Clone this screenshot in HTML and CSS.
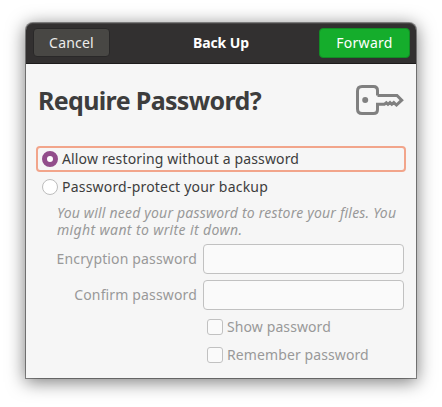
FILE: index.html
```html
<!DOCTYPE html>
<html lang="en">
<head>
<meta charset="utf-8">
<title>Back Up</title>
<link rel="stylesheet" href="styles.css">
</head>
<body>
<main class="window">
  <header class="headerbar">
    <button class="button cancel">Cancel</button>
    <h2 class="window-title">Back Up</h2>
    <button class="button forward">Forward</button>
  </header>
  <section class="content">
    <div class="heading">
      <h1>Require Password?</h1>
      <svg class="key" width="50" height="32" viewBox="0 0 50 32" fill="none" stroke="#808080" stroke-width="3">
        <path d="M22.500 11.500V6.500Q22.500 2.500 18.500 2.500H7Q2.500 2.500 2.500 7V25Q2.500 29.500 7 29.500H18.500Q22.500 29.500 22.500 25.500V20.300H30"/>
        <path d="M22.500 11.500H42L46.700 16.200L41.500 21L38.800 18.600L36.800 20.300L35 18.600L33 20.300L31.300 18.800L29.500 20.300"/>
        <circle cx="10.200" cy="16" r="3" fill="#808080" stroke="none"/>
      </svg>
    </div>
    <div class="choice focused"><span class="radio checked"></span><span class="t-allow">Allow restoring without a password</span></div>
    <div class="choice"><span class="radio"></span><span class="t-protect">Password-protect your backup</span></div>
    <p class="hint"><span>You will need your password to restore your files. You</span> <span class="t-write">might want to write it down.</span></p>
    <div class="form">
      <span class="label">Encryption password</span><span class="entry"></span>
      <span class="label">Confirm password</span><span class="entry"></span>
    </div>
    <div class="check-row"><span class="check"></span><span>Show password</span></div>
    <div class="check-row"><span class="check"></span><span>Remember password</span></div>
  </section>
</main>
</body>
</html>
```
FILE: styles.css
```css
* { box-sizing: border-box; }
body {
  margin: 0;
  width: 442px;
  height: 407px;
  overflow: hidden;
  background: #fff;
  font: 14px/20px "Noto Sans", "Open Sans", sans-serif;
  letter-spacing: 0.2px;
  color: #3d3d3d;
}
.window {
  width: 390px;
  height: 355px;
  margin: 23px 0 0 26px;
  border-radius: 7px 7px 0 0;
  background: #f6f6f6;
  box-shadow: 0 0 0 1px rgba(0, 0, 0, 0.4), 0 3px 18px 1px rgba(0, 0, 0, 0.52);
}
.headerbar {
  display: flex;
  justify-content: space-between;
  align-items: center;
  height: 41px;
  padding: 0 6px 1px 7px;
  border-radius: 7px 7px 0 0;
  border-bottom: 1px solid #1d1c1c;
  background: #323030;
  box-shadow: inset 0 1px #474545;
}
.window-title {
  margin: 0 0 0 13px;
  font-size: 14px;
  line-height: 20px;
  letter-spacing: -0.1px;
  color: #fff;
}
.button {
  padding: 0;
  border-radius: 4px;
  font: inherit;
  text-align: center;
}
.cancel {
  width: 77px;
  height: 29px;
  border: 1px solid #292828;
  background: #484744;
  color: #ececea;
  letter-spacing: 0.2px;
}
.forward {
  width: 91px;
  height: 30px;
  border: 1px solid #128c25;
  background: #15ad2c;
  color: #fff;
  letter-spacing: 0.3px;
}
.content { padding: 0 10px; }
.heading {
  display: flex;
  justify-content: space-between;
  height: 82px;
  padding: 20px 0 0 2px;
}
.heading h1 {
  margin: 0;
  font-size: 25px;
  line-height: 32px;
  letter-spacing: -0.65px;
}
.key { margin-right: 1px; }
.choice {
  display: flex;
  align-items: center;
  gap: 4px;
  width: 370px;
  height: 28px;
  padding-left: 6px;
}
.choice.focused {
  height: 26px;
  margin-bottom: 1px;
  padding-left: 4px;
  border: 2px solid #f2a58b;
  border-radius: 4px;
}
.radio {
  width: 16px;
  height: 16px;
  border: 1px solid #bdbdbd;
  border-radius: 50%;
  background: #fff;
}
.radio.checked {
  border: 5px solid #924d8b;
}
.t-allow { letter-spacing: 0.15px; }
.hint {
  margin: 3px 0 0 21px;
  font-style: italic;
  line-height: 17px;
  white-space: nowrap;
  color: #999;
}
.hint span { display: block; }
.hint .t-write { letter-spacing: 0.37px; }
.form {
  display: grid;
  grid-template-columns: 161px 201px;
  column-gap: 6px;
  row-gap: 6px;
  align-items: center;
  margin-top: 6px;
}
.label {
  letter-spacing: 0.15px;
  text-align: right;
  color: #999;
}
.entry {
  height: 30px;
  border: 1px solid #c1c1c1;
  border-radius: 4px;
  background: #fafafa;
}
.check-row {
  display: flex;
  align-items: center;
  gap: 4px;
  height: 28px;
  padding-left: 171px;
  letter-spacing: 0.1px;
  color: #999;
}
.form + .check-row { margin-top: 3px; }
.check {
  width: 16px;
  height: 16px;
  border: 1px solid #c1c1c1;
  border-radius: 3px;
  background: #fafafa;
}
```
